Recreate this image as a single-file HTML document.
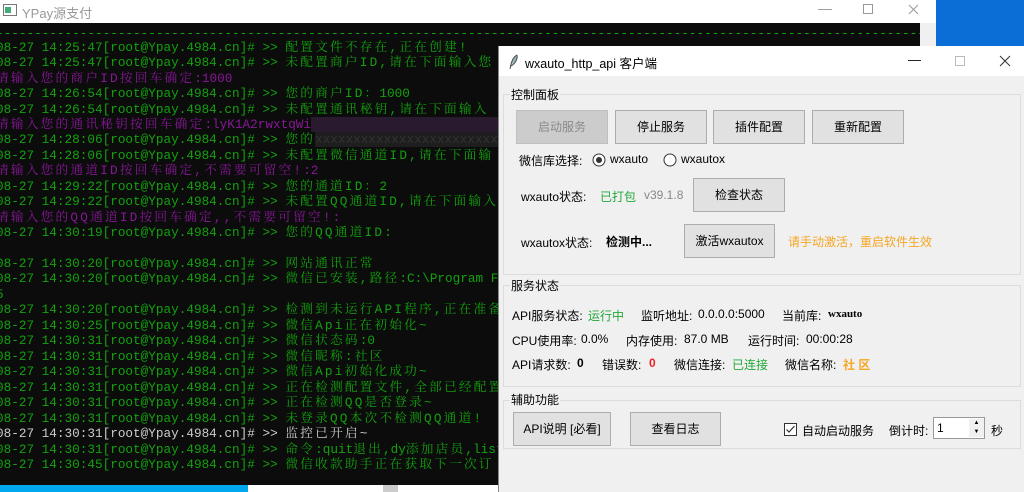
<!DOCTYPE html>
<html><head><meta charset="utf-8"><style>
*{margin:0;padding:0;box-sizing:border-box}
body{width:1024px;height:492px;overflow:hidden;position:relative;background:#0a6ed6;font-family:"Liberation Sans","Noto Sans CJK SC",sans-serif}
#bg{position:absolute;left:0;top:0;width:936px;height:485px;background:#fff}
#bgt{position:absolute;left:0;top:0;width:936px;height:23px;background:#fff;font-size:13px;color:#999}
#con{position:absolute;left:0;top:23px;width:920px;height:462px;background:#0c0c0c;overflow:hidden}
#sb{position:absolute;left:920px;top:23px;width:16px;height:462px;background:#f0f0f0}
.l{position:absolute;left:-4px;white-space:pre;font-family:"Liberation Mono","Noto Serif CJK SC",monospace;font-size:12.7px;line-height:15px;color:#13a10e}
.p{color:#881798}.w{color:#cccccc}
.k{letter-spacing:2.2px}
#tb{position:absolute;left:0;top:485px;width:1024px;height:7px;background:#fff}
#win{position:absolute;left:498px;top:46px;width:526px;height:446px;background:#f0f0f0;border-left:1px solid #888;font-size:12px;color:#000}
#wt{position:absolute;left:0;top:0;width:526px;height:30px;background:#fff}
.a{position:absolute;white-space:nowrap}
.btn{position:absolute;background:#e1e1e1;border:1px solid #adadad;text-align:center;font-size:12px}
.grp{position:absolute;border:1px solid #dcdcdc}
.gl{position:absolute;background:#f0f0f0;padding:0 1px;font-size:12px}
.g{color:#22a83a}.o{color:#f5a623}
</style></head><body>
<div id="bg"></div>
<div id="bgt"><svg style="position:absolute;left:3px;top:4px" width="14" height="12"><rect x="0.5" y="0.5" width="13" height="11" fill="#fff" stroke="#777"/><rect x="2" y="3" width="6" height="6" fill="#4a7"/></svg><span style="position:absolute;left:22px;top:3px">YPay源支付</span>
<span style="position:absolute;left:818px;top:0;font-size:14px">—</span><svg style="position:absolute;left:863px;top:4px" width="11" height="11"><rect x="0.5" y="0.5" width="9" height="9" fill="none" stroke="#999"/></svg><svg style="position:absolute;left:908px;top:4px" width="11" height="11"><path d="M1 1L10 10M10 1L1 10" stroke="#999"/></svg></div>
<div id="con">
<div class="l" style="top:3px">--------------------------------------------------------------------------------------------------------------------------</div>
<div class="l" style="top:17px">08-27 14:25:47[root@Ypay.4984.cn]# >> <span class="k">配置文件不存在,正在创建!</span></div>
<div class="l" style="top:32px">08-27 14:25:47[root@Ypay.4984.cn]# >> <span class="k">未配置商户ID,请在下面输入您</span></div>
<div class="l p" style="top:48px"><span class="k">请输入您的商户ID按回车确定</span>:1000</div>
<div class="l" style="top:63px">08-27 14:26:54[root@Ypay.4984.cn]# >> <span class="k">您的商户ID：</span>1000</div>
<div class="l" style="top:79px">08-27 14:26:54[root@Ypay.4984.cn]# >> <span class="k">未配置通讯秘钥,请在下面输入</span></div>
<div class="l p" style="top:94px"><span class="k">请输入您的通讯秘钥按回车确定</span>:lyK1A2rwxtqWi<span style="background:#2a1a30;color:#2a1a30">xxxxxxxxxxxxxxxxxxxxxxxxx</span></div>
<div class="l" style="top:109px">08-27 14:28:06[root@Ypay.4984.cn]# >> <span class="k">您的</span><span style="background:#1e1e1e;color:#333">xxxxxxxxxxxxxxxxxxxxxxxxxxx</span></div>
<div class="l" style="top:125px">08-27 14:28:06[root@Ypay.4984.cn]# >> <span class="k">未配置微信通道ID,请在下面输</span></div>
<div class="l p" style="top:140px"><span class="k">请输入您的通道ID按回车确定,不需要可留空!</span>:2</div>
<div class="l" style="top:156px">08-27 14:29:22[root@Ypay.4984.cn]# >> <span class="k">您的通道ID：</span>2</div>
<div class="l" style="top:171px">08-27 14:29:22[root@Ypay.4984.cn]# >> <span class="k">未配置QQ通道ID,请在下面输入</span></div>
<div class="l p" style="top:187px"><span class="k">请输入您的QQ通道ID按回车确定,,不需要可留空!</span>:</div>
<div class="l" style="top:202px">08-27 14:30:19[root@Ypay.4984.cn]# >> <span class="k">您的QQ通道ID:</span></div>
<div class="l" style="top:233px">08-27 14:30:20[root@Ypay.4984.cn]# >> <span class="k">网站通讯正常</span></div>
<div class="l" style="top:248px">08-27 14:30:20[root@Ypay.4984.cn]# >> <span class="k">微信已安装,路径</span>:C:\Program Files</div>
<div class="l" style="top:264px">5</div>
<div class="l" style="top:279px">08-27 14:30:20[root@Ypay.4984.cn]# >> <span class="k">检测到未运行API程序,正在准备</span></div>
<div class="l" style="top:295px">08-27 14:30:25[root@Ypay.4984.cn]# >> <span class="k">微信Api正在初始化~</span></div>
<div class="l" style="top:310px">08-27 14:30:31[root@Ypay.4984.cn]# >> <span class="k">微信状态码</span>:0</div>
<div class="l" style="top:326px">08-27 14:30:31[root@Ypay.4984.cn]# >> <span class="k">微信昵称:社区</span></div>
<div class="l" style="top:341px">08-27 14:30:31[root@Ypay.4984.cn]# >> <span class="k">微信Api初始化成功~</span></div>
<div class="l" style="top:357px">08-27 14:30:31[root@Ypay.4984.cn]# >> <span class="k">正在检测配置文件,全部已经配置</span></div>
<div class="l" style="top:372px">08-27 14:30:31[root@Ypay.4984.cn]# >> <span class="k">正在检测QQ是否登录~</span></div>
<div class="l" style="top:388px">08-27 14:30:31[root@Ypay.4984.cn]# >> <span class="k">未登录QQ本次不检测QQ通道!</span></div>
<div class="l w" style="top:403px">08-27 14:30:31[root@Ypay.4984.cn]# >> <span class="k">监控已开启~</span></div>
<div class="l" style="top:419px">08-27 14:30:31[root@Ypay.4984.cn]# >> <span class="k">命令</span>:quit<span class="k">退出</span>,dy<span class="k">添加店员</span>,list</div>
<div class="l" style="top:434px">08-27 14:30:45[root@Ypay.4984.cn]# >> <span class="k">微信收款助手正在获取下一次订</span></div>
</div>
<div id="sb"></div>
<div id="tb"><div style="position:absolute;left:0;top:0;width:248px;height:7px;background:#00a8f0"></div><div style="position:absolute;left:383px;top:0;width:15px;height:7px;background:#ccc"></div></div>

<div id="win">
<div id="wt">
<svg class="a" style="left:10px;top:8px" width="10" height="16"><path d="M8 1C4 3 2 8 1 15M8 1C9 5 6 10 2 12" stroke="#555" fill="#8aa" stroke-width="1"/></svg>
<span class="a" style="left:26px;top:7px;font-size:12.5px">wxauto_http_api 客户端</span>
<span class="a" style="left:409px;top:6px;font-size:13px">—</span>
<svg class="a" style="left:456px;top:10px" width="11" height="11"><rect x="0.5" y="0.5" width="9" height="9" fill="none" stroke="#bbb"/></svg>
<svg class="a" style="left:500px;top:9px" width="12" height="12"><path d="M1 1L11 11M11 1L1 11" stroke="#333"/></svg>
</div>
<div class="grp" style="left:4px;top:48px;width:518px;height:181px"></div>
<span class="gl" style="left:11px;top:40px">控制面板</span>
<div class="btn" style="left:17px;top:64px;width:92px;height:34px;line-height:32px;background:#cccccc;border-color:#bfbfbf;color:#8a8a8a">启动服务</div>
<div class="btn" style="left:116px;top:64px;width:92px;height:34px;line-height:32px">停止服务</div>
<div class="btn" style="left:214px;top:64px;width:92px;height:34px;line-height:32px">插件配置</div>
<div class="btn" style="left:313px;top:64px;width:92px;height:34px;line-height:32px">重新配置</div>
<span class="a" style="left:20px;top:106px">微信库选择:</span>
<svg class="a" style="left:93px;top:107px" width="14" height="14"><circle cx="7" cy="7" r="6" fill="#fff" stroke="#333"/><circle cx="7" cy="7" r="3" fill="#333"/></svg>
<span class="a" style="left:111px;top:106px">wxauto</span>
<svg class="a" style="left:164px;top:107px" width="14" height="14"><circle cx="7" cy="7" r="6" fill="#fff" stroke="#333"/></svg>
<span class="a" style="left:182px;top:106px">wxautox</span>
<span class="a" style="left:22px;top:142px">wxauto状态:</span>
<span class="a g" style="left:101px;top:142px">已打包</span>
<span class="a" style="left:145px;top:142px;color:#888">v39.1.8</span>
<div class="btn" style="left:194px;top:132px;width:92px;height:34px;line-height:32px">检查状态</div>
<span class="a" style="left:22px;top:188px">wxautox状态:</span>
<span class="a" style="left:107px;top:187px;font-weight:bold">检测中...</span>
<div class="btn" style="left:185px;top:178px;width:91px;height:34px;line-height:32px">激活wxautox</div>
<span class="a o" style="left:289px;top:187px">请手动激活，重启软件生效</span>

<div class="grp" style="left:4px;top:239px;width:518px;height:102px"></div>
<span class="gl" style="left:11px;top:231px">服务状态</span>
<span class="a" style="left:13px;top:261px">API服务状态:</span><span class="a g" style="left:89px;top:261px">运行中</span>
<span class="a" style="left:142px;top:261px">监听地址:</span><span class="a" style="left:199px;top:261px">0.0.0.0:5000</span>
<span class="a" style="left:283px;top:261px">当前库:</span><span class="a" style="left:329px;top:262px;font-family:'Liberation Serif',serif;font-weight:bold;font-size:11px">wxauto</span>
<span class="a" style="left:13px;top:286px">CPU使用率:</span><span class="a" style="left:82px;top:286px">0.0%</span>
<span class="a" style="left:127px;top:286px">内存使用:</span><span class="a" style="left:185px;top:286px">87.0 MB</span>
<span class="a" style="left:249px;top:286px">运行时间:</span><span class="a" style="left:307px;top:286px">00:00:28</span>
<span class="a" style="left:13px;top:310px">API请求数:</span><span class="a" style="left:78px;top:310px;font-weight:bold">0</span>
<span class="a" style="left:103px;top:310px">错误数:</span><span class="a" style="left:150px;top:310px;font-weight:bold;color:#e22">0</span>
<span class="a" style="left:175px;top:310px">微信连接:</span><span class="a g" style="left:233px;top:310px">已连接</span>
<span class="a" style="left:286px;top:310px">微信名称:</span><span class="a o" style="left:344px;top:310px;font-weight:bold">社 区</span>

<div class="grp" style="left:4px;top:354px;width:518px;height:49px"></div>
<span class="gl" style="left:11px;top:345px">辅助功能</span>
<div class="btn" style="left:14px;top:366px;width:98px;height:34px;line-height:32px">API说明 [必看]</div>
<div class="btn" style="left:131px;top:366px;width:91px;height:34px;line-height:32px">查看日志</div>
<svg class="a" style="left:285px;top:377px" width="13" height="13"><rect x="0.5" y="0.5" width="12" height="12" fill="#fff" stroke="#333"/><path d="M2.5 6.5L5 9L10.5 3" stroke="#333" fill="none" stroke-width="1.2"/></svg>
<span class="a" style="left:303px;top:376px">自动启动服务</span>
<span class="a" style="left:390px;top:376px">倒计时:</span>
<div class="a" style="left:434px;top:371px;width:52px;height:22px;background:#fff;border:1px solid #999"><span class="a" style="left:3px;top:3px">1</span>
<div class="a" style="left:35px;top:1px;width:15px;height:9px;background:#f0f0f0;font-size:6px;text-align:center;line-height:9px">▲</div>
<div class="a" style="left:35px;top:10px;width:15px;height:9px;background:#f0f0f0;font-size:6px;text-align:center;line-height:9px">▼</div></div>
<span class="a" style="left:492px;top:376px">秒</span>
</div>
</body></html>
